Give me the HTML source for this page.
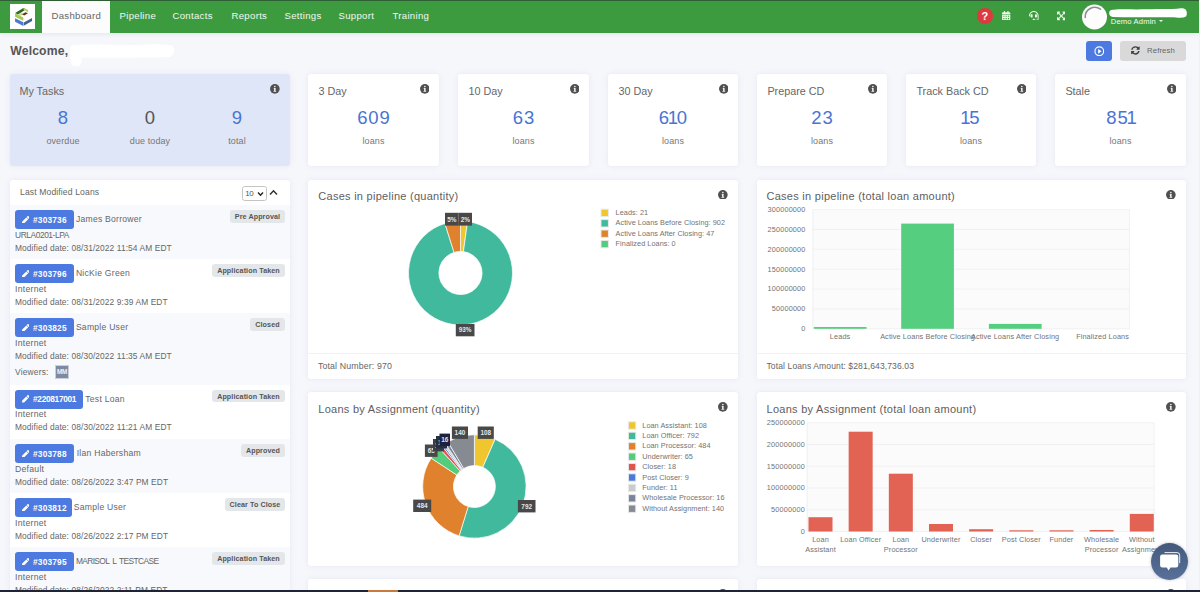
<!DOCTYPE html>
<html lang="en">
<head>
<meta charset="utf-8">
<title>Dashboard</title>
<style>
*{box-sizing:border-box;margin:0;padding:0}
html,body{width:1200px;height:592px;overflow:hidden}
body{background:#f6f7fb;font-family:"Liberation Sans",sans-serif;color:#555;position:relative;font-size:9px}
.abs{position:absolute}
.t{position:absolute;white-space:nowrap;line-height:1}
/* header */
#hdr{position:absolute;left:0;top:0;width:1200px;height:33px;background:#3d9b3f;border-top:1px solid #2e5e33;box-shadow:0 1px 4px rgba(60,70,90,.10)}
#logo{position:absolute;left:10px;top:3px;width:25.3px;height:25px;background:#fff}
#tab{position:absolute;left:42px;top:0;width:68px;height:32px;background:#fcfcfd}
.nav{position:absolute;top:10px;color:#f1f8f0;font-size:9.6px;white-space:nowrap;line-height:1;letter-spacing:.3px}
/* cards */
.card{position:absolute;background:#fff;border-radius:3px;box-shadow:0 0 5px rgba(205,210,228,.4)}
.ct{position:absolute;left:10.4px;top:11.8px;font-size:10.8px;color:#666;white-space:nowrap;line-height:1;letter-spacing:0}
.num{position:absolute;left:0;width:100%;text-align:center;top:35.1px;font-size:18.5px;color:#4a74d2;line-height:1;letter-spacing:.9px;padding-left:.9px}
.sub{position:absolute;left:0;width:100%;text-align:center;top:63.1px;font-size:9px;color:#777;line-height:1;letter-spacing:.1px}
.info{position:absolute;width:9.7px;height:9.7px;margin:.15px}
.btn{background:#4c7ae0;border-radius:3px}
.badge{background:#e3e7ea;border-radius:3px;color:#555;font-size:7.15px;font-weight:bold;text-align:center;line-height:15.4px;overflow:hidden;white-space:nowrap;letter-spacing:.1px}
.sm{font-size:8.4px;color:#666;letter-spacing:.1px}
.ttl{font-size:11px;color:#606060;letter-spacing:.27px}
svg text{font-family:"Liberation Sans",sans-serif}
</style>
</head>
<body>
<div id="hdr">
  <div id="logo">
    <svg width="25.3" height="25.2" viewBox="0 0 427 425" style="display:block">
      <polygon points="85,240 225,310 225,372 85,300" fill="#4a79d8"/>
      <polygon points="232,312 372,238 372,286 232,368" fill="#44608c"/>
      <polygon points="85,158 225,228 225,284 85,214" fill="#a9c94e"/>
      <polygon points="88,150 225,66 272,90 135,178" fill="#2a6a2c"/>
      <polygon points="228,62 306,100 306,138 266,116 228,96" fill="#b3d054"/>
      <polygon points="150,172 205,145 205,185 150,205" fill="#c5dc7a"/>
      <polygon points="200,172 262,138 304,158 240,194" fill="#6a3412"/>
    </svg>
  </div>
  <div id="tab"></div>
  <div class="nav" style="left:51.5px;color:#666">Dashboard</div>
  <div class="nav" style="left:119.5px">Pipeline</div>
  <div class="nav" style="left:172.5px">Contacts</div>
  <div class="nav" style="left:231.5px">Reports</div>
  <div class="nav" style="left:284.5px">Settings</div>
  <div class="nav" style="left:338.5px">Support</div>
  <div class="nav" style="left:392.5px">Training</div>
  <div class="abs" style="left:977.2px;top:7.2px;width:15.6px;height:15.6px;border-radius:50%;background:#dc3a3c"></div>
  <div class="t" style="left:981.6px;top:9.5px;font-size:11px;font-weight:bold;color:#fff">?</div>
  <svg class="abs" style="left:1002.4px;top:10.1px" width="8.4" height="9.4" viewBox="0 0 448 512"><path d="M0 464c0 26.5 21.5 48 48 48h352c26.5 0 48-21.5 48-48V192H0v272zm320-196c0-6.6 5.4-12 12-12h40c6.6 0 12 5.4 12 12v40c0 6.600-5.400 12-12 12h-40c-6.600 0-12-5.400-12-12v-40zm0 128c0-6.600 5.400-12 12-12h40c6.600 0 12 5.400 12 12v40c0 6.600-5.400 12-12 12h-40c-6.600 0-12-5.400-12-12v-40zM192 268c0-6.600 5.400-12 12-12h40c6.600 0 12 5.400 12 12v40c0 6.600-5.400 12-12 12h-40c-6.600 0-12-5.400-12-12v-40zm0 128c0-6.600 5.400-12 12-12h40c6.600 0 12 5.400 12 12v40c0 6.600-5.400 12-12 12h-40c-6.600 0-12-5.400-12-12v-40zM64 268c0-6.600 5.400-12 12-12h40c6.600 0 12 5.400 12 12v40c0 6.600-5.400 12-12 12H76c-6.600 0-12-5.400-12-12v-40zm0 128c0-6.600 5.400-12 12-12h40c6.600 0 12 5.400 12 12v40c0 6.600-5.400 12-12 12H76c-6.600 0-12-5.400-12-12v-40zM400 64h-48V16c0-8.800-7.200-16-16-16h-32c-8.800 0-16 7.200-16 16v48H160V16c0-8.800-7.200-16-16-16h-32c-8.800 0-16 7.200-16 16v48H48C21.500 64 0 85.500 0 112v48h448v-48c0-26.500-21.500-48-48-48z" fill="#eef8ec"/></svg>
  <svg class="abs" style="left:1029.2px;top:9.9px" width="9.6" height="9.6" viewBox="0 0 512 512"><path d="M192 208c0-17.670-14.330-32-32-32h-16c-35.350 0-64 28.650-64 64v48c0 35.350 28.650 64 64 64h16c17.670 0 32-14.330 32-32V208zm176 144c35.350 0 64-28.650 64-64v-48c0-35.350-28.650-64-64-64h-16c-17.670 0-32 14.330-32 32v112c0 17.670 14.330 32 32 32h16zM256 0C113.180 0 4.580 118.830 0 256v16c0 8.840 7.160 16 16 16h16c8.840 0 16-7.160 16-16v-16c0-114.690 93.310-208 208-208s208 93.310 208 208h-.12c.08 2.430.12 165.720.12 165.720 0 23.350-18.930 42.280-42.280 42.280H320c0-26.510-21.490-48-48-48h-32c-26.510 0-48 21.490-48 48s21.490 48 48 48h181.720c49.860 0 90.280-40.420 90.280-90.280V256C507.420 118.830 398.820 0 256 0z" fill="#eef8ec"/></svg>
  <svg class="abs" style="left:1056.8px;top:9.9px" width="8.6" height="9.8" viewBox="0 0 448 512"><path d="M448 344v112a23.940 23.940 0 0 1-24 24H312c-21.390 0-32.090-25.900-17-41l36.200-36.200L224 295.600 116.770 402.900 153 439c15.090 15.100 4.390 41-17 41H24a23.940 23.940 0 0 1-24-24V344c0-21.400 25.890-32.100 41-17l36.190 36.200L184.460 256 77.180 148.700 41 185c-15.100 15.100-41 4.400-41-17V56a23.940 23.940 0 0 1 24-24h112c21.390 0 32.090 25.900 17 41l-36.200 36.200L224 216.400l107.230-107.300L295 73c-15.090-15.100-4.390-41 17-41h112a23.940 23.940 0 0 1 24 24v112c0 21.400-25.890 32.100-41 17l-36.190-36.200L263.540 256l107.280 107.300L407 327.100c15.100-15.200 41-4.500 41 16.900z" fill="#eef8ec"/></svg>
  <svg class="abs" style="left:1081.8px;top:2.5px" width="25" height="26" viewBox="0 0 25 26"><circle cx="12.5" cy="13" r="12.5" fill="#fdfdfd"/><path d="M3.2 13.5A9.6 9.6 0 0 1 18.5 5.2" fill="none" stroke="#8a8c92" stroke-width="1.5" stroke-linecap="round"/></svg>
  <svg class="abs" style="left:1107px;top:5px" width="82" height="16" viewBox="0 0 82 16"><path d="M2.2 6.2C2.5 4.6 4 3.6 6 3.8C14 3 22 3.4 30 3.6C42 3 58 3.2 70 2.8C73 1.8 77 2 78.6 3.6C80.2 5.2 80.2 9 79 10.6C76 12.6 70 11.4 64 11.2C44 11 24 11.6 6 11C3.4 10.8 1.8 8.6 2.2 6.2Z" fill="#fff"/></svg>
  <div class="t" style="left:1110.8px;top:16.6px;font-size:7.6px;color:#f6fbf5;letter-spacing:.16px">Demo Admin</div>
  <div class="abs" style="left:1159.3px;top:19.2px;width:0;height:0;border-left:2.2px solid transparent;border-right:2.2px solid transparent;border-top:2.7px solid #f4faf3"></div>
</div>

<div class="t" style="left:10.3px;top:45.2px;font-size:12.2px;font-weight:bold;color:#555;letter-spacing:.15px">Welcome,</div>
<svg class="abs" style="left:66px;top:40px" width="112" height="28" viewBox="0 0 112 28"><path d="M4.5 7C5 5 7 4.5 10 4.8C30 4 50 4.6 70 5C82 4 96 4.2 104 5C107 5.4 108.4 8 108 11C107.6 14.6 106 17 102 17.2C80 17.6 40 18 16 17.8C15.8 21 15.6 24 14 25.4C11 26.4 6 26 5 24C4.2 18 4 12 4.5 7Z" fill="#fff" style="filter:blur(.7px)"/></svg>

<div class="abs btn" style="left:1085.6px;top:41px;width:26.4px;height:19.6px"></div>
<svg class="abs" style="left:1093.6px;top:45.6px" width="10.6" height="10.6" viewBox="0 0 100 100"><circle cx="50" cy="50" r="41" fill="none" stroke="#fff" stroke-width="11"/><path d="M39 28L71 50L39 72Z" fill="#fff"/></svg>
<div class="abs" style="left:1120.4px;top:41px;width:65.6px;height:19.6px;background:#d9d9d9;border-radius:3px"></div>
<svg class="abs" style="left:1130.8px;top:46.2px" width="8.8" height="8.8" viewBox="0 0 512 512"><path d="M370.72 133.28C339.458 104.008 298.888 87.962 255.848 88c-77.458.068-144.328 53.178-162.791 126.85-1.344 5.363-6.122 9.15-11.651 9.15H24.103c-7.498 0-13.194-6.807-11.807-14.176C33.933 94.924 134.813 8 256 8c66.448 0 126.791 26.136 171.315 68.685L463.03 40.97C478.149 25.851 504 36.559 504 57.941V192c0 13.255-10.745 24-24 24H345.941c-21.382 0-32.09-25.851-16.971-40.971l41.75-41.749zM32 296h134.059c21.382 0 32.09 25.851 16.971 40.971l-41.75 41.75c31.262 29.273 71.835 45.319 114.876 45.28 77.418-.07 144.315-53.144 162.787-126.849 1.344-5.363 6.122-9.15 11.651-9.15h57.304c7.498 0 13.194 6.807 11.807 14.176C478.067 417.076 377.187 504 256 504c-66.448 0-126.791-26.136-171.315-68.685L48.970 471.03C33.851 486.149 8 475.441 8 454.059V320c0-13.255 10.745-24 24-24z" fill="#3c3c3c"/></svg>
<div class="t" style="left:1147px;top:46.6px;font-size:7.7px;color:#666;letter-spacing:.15px">Refresh</div>
<!-- stat cards -->
<div class="card" style="left:10px;top:74px;width:280px;height:92px;background:#dfe6f7">
  <div class="ct" style="left:9.4px">My Tasks</div><svg class="info" style="left:260.2px;top:9.9px" viewBox="0 0 100 100"><circle cx="50" cy="50" r="50" fill="#505050"/><circle cx="50" cy="27" r="8.5" fill="#f2f2f2"/><path d="M38 42h20v30h6v8H36v-8h6V50h-4z" fill="#f2f2f2"/></svg>
  <div class="num" style="left:0;width:106px">8</div><div class="sub" style="left:0;width:106px">overdue</div>
  <div class="num" style="left:87px;width:106px;color:#555">0</div><div class="sub" style="left:87px;width:106px">due today</div>
  <div class="num" style="left:174px;width:106px">9</div><div class="sub" style="left:174px;width:106px">total</div>
</div>
<div class="card" style="left:308px;top:74px;width:131px;height:92px"><div class="ct">3 Day</div><svg class="info" style="left:111.6px;top:9.9px" viewBox="0 0 100 100"><circle cx="50" cy="50" r="50" fill="#505050"/><circle cx="50" cy="27" r="8.5" fill="#f2f2f2"/><path d="M38 42h20v30h6v8H36v-8h6V50h-4z" fill="#f2f2f2"/></svg><div class="num">609</div><div class="sub">loans</div></div>
<div class="card" style="left:458px;top:74px;width:131px;height:92px"><div class="ct">10 Day</div><svg class="info" style="left:111.6px;top:9.9px" viewBox="0 0 100 100"><circle cx="50" cy="50" r="50" fill="#505050"/><circle cx="50" cy="27" r="8.5" fill="#f2f2f2"/><path d="M38 42h20v30h6v8H36v-8h6V50h-4z" fill="#f2f2f2"/></svg><div class="num">63</div><div class="sub">loans</div></div>
<div class="card" style="left:608px;top:74px;width:130px;height:92px"><div class="ct">30 Day</div><svg class="info" style="left:110.6px;top:9.9px" viewBox="0 0 100 100"><circle cx="50" cy="50" r="50" fill="#505050"/><circle cx="50" cy="27" r="8.5" fill="#f2f2f2"/><path d="M38 42h20v30h6v8H36v-8h6V50h-4z" fill="#f2f2f2"/></svg><div class="num">6<span style="margin:0 -2.2px">1</span>0</div><div class="sub">loans</div></div>
<div class="card" style="left:757px;top:74px;width:130px;height:92px"><div class="ct">Prepare CD</div><svg class="info" style="left:110.6px;top:9.9px" viewBox="0 0 100 100"><circle cx="50" cy="50" r="50" fill="#505050"/><circle cx="50" cy="27" r="8.5" fill="#f2f2f2"/><path d="M38 42h20v30h6v8H36v-8h6V50h-4z" fill="#f2f2f2"/></svg><div class="num">23</div><div class="sub">loans</div></div>
<div class="card" style="left:906px;top:74px;width:130px;height:92px"><div class="ct">Track Back CD</div><svg class="info" style="left:110.6px;top:9.9px" viewBox="0 0 100 100"><circle cx="50" cy="50" r="50" fill="#505050"/><circle cx="50" cy="27" r="8.5" fill="#f2f2f2"/><path d="M38 42h20v30h6v8H36v-8h6V50h-4z" fill="#f2f2f2"/></svg><div class="num"><span style="margin:0 -2.2px">1</span>5</div><div class="sub">loans</div></div>
<div class="card" style="left:1055px;top:74px;width:131px;height:92px"><div class="ct">Stale</div><svg class="info" style="left:111.6px;top:9.9px" viewBox="0 0 100 100"><circle cx="50" cy="50" r="50" fill="#505050"/><circle cx="50" cy="27" r="8.5" fill="#f2f2f2"/><path d="M38 42h20v30h6v8H36v-8h6V50h-4z" fill="#f2f2f2"/></svg><div class="num">85<span style="margin:0 -2.2px">1</span></div><div class="sub">loans</div></div>


<div class="card" style="left:10px;top:180px;width:280px;height:430px;overflow:hidden"></div>
<div class="t" style="left:20px;top:188px;font-size:8.6px;color:#666;letter-spacing:.12px">Last Modified Loans</div>
<div class="abs" style="left:242px;top:186.2px;width:24.8px;height:14.4px;border:1px solid #c4c4c4;border-radius:2.5px;background:#fff"></div>
<div class="t" style="left:245.3px;top:189.6px;font-size:8px;color:#555;letter-spacing:-.4px">10</div>
<svg class="abs" style="left:257.1px;top:190.6px" width="7" height="6" viewBox="0 0 7 6"><path d="M1 1.5L3.5 4.2L6 1.5" fill="none" stroke="#222" stroke-width="1.4"/></svg>
<svg class="abs" style="left:269.2px;top:188.9px" width="9" height="7" viewBox="0 0 9 7"><path d="M1 5.5L4.5 1.8L8 5.5" fill="none" stroke="#333" stroke-width="1.5"/></svg>
<div class="abs" style="left:10px;top:205px;width:280px;height:54px;background:#f8f9fc"></div>
<div class="abs btn" style="left:15px;top:210px;width:58.6px;height:19px"></div>
<svg class="abs" style="left:21.9px;top:215.6px" width="7.6" height="7.6" viewBox="0 0 512 512"><path d="M290.74 93.24l128.02 128.02-277.99 277.99-114.14 12.6C11.35 513.54-1.56 500.62.14 485.34l12.7-114.22 277.9-277.88zm207.2-19.06l-60.11-60.11c-18.75-18.75-49.16-18.75-67.91 0l-56.55 56.55 128.02 128.02 56.55-56.55c18.75-18.76 18.75-49.16 0-67.91z" fill="#fff"/></svg>
<div class="t" style="left:33px;top:215.6px;font-size:8.3px;color:#fff;font-weight:bold;letter-spacing:0.2px">#303736</div>
<div class="t" style="left:75.9px;top:215.2px;font-size:8.6px;color:#666;letter-spacing:0.25px;word-spacing:0px">James Borrower</div>
<div class="abs badge" style="left:230px;top:210.2px;width:55px;height:12.6px">Pre Approval</div>
<div class="t sm" style="left:15px;top:231px;letter-spacing:-.42px">URLA0201-LPA</div>
<div class="t sm" style="left:15px;top:243.5px">Modified date: 08/31/2022 11:54 AM EDT</div>
<div class="abs btn" style="left:15px;top:264px;width:58.6px;height:19px"></div>
<svg class="abs" style="left:21.9px;top:269.6px" width="7.6" height="7.6" viewBox="0 0 512 512"><path d="M290.74 93.24l128.02 128.02-277.99 277.99-114.14 12.6C11.35 513.54-1.56 500.62.14 485.34l12.7-114.22 277.9-277.88zm207.2-19.06l-60.11-60.11c-18.75-18.75-49.16-18.75-67.91 0l-56.55 56.55 128.02 128.02 56.55-56.55c18.75-18.76 18.75-49.16 0-67.91z" fill="#fff"/></svg>
<div class="t" style="left:33px;top:269.6px;font-size:8.3px;color:#fff;font-weight:bold;letter-spacing:0.2px">#303796</div>
<div class="t" style="left:75.9px;top:269.2px;font-size:8.6px;color:#666;letter-spacing:0.25px;word-spacing:0px">NicKie Green</div>
<div class="abs badge" style="left:212px;top:264.2px;width:73px;height:12.6px">Application Taken</div>
<div class="t sm" style="left:15px;top:285px;font-size:8.7px;letter-spacing:.25px;margin-top:-.2px">Internet</div>
<div class="t sm" style="left:15px;top:297.5px">Modified date: 08/31/2022 9:39 AM EDT</div>
<div class="abs" style="left:10px;top:313px;width:280px;height:72px;background:#f8f9fc"></div>
<div class="abs btn" style="left:15px;top:318px;width:58.6px;height:19px"></div>
<svg class="abs" style="left:21.9px;top:323.6px" width="7.6" height="7.6" viewBox="0 0 512 512"><path d="M290.74 93.24l128.02 128.02-277.99 277.99-114.14 12.6C11.35 513.54-1.56 500.62.14 485.34l12.7-114.22 277.9-277.88zm207.2-19.06l-60.11-60.11c-18.75-18.75-49.16-18.75-67.91 0l-56.55 56.55 128.02 128.02 56.55-56.55c18.75-18.76 18.75-49.16 0-67.91z" fill="#fff"/></svg>
<div class="t" style="left:33px;top:323.6px;font-size:8.3px;color:#fff;font-weight:bold;letter-spacing:0.2px">#303825</div>
<div class="t" style="left:75.9px;top:323.2px;font-size:8.6px;color:#666;letter-spacing:0.25px;word-spacing:0px">Sample User</div>
<div class="abs badge" style="left:250px;top:318.2px;width:35px;height:12.6px">Closed</div>
<div class="t sm" style="left:15px;top:339px;font-size:8.7px;letter-spacing:.25px;margin-top:-.2px">Internet</div>
<div class="t sm" style="left:15px;top:351.5px">Modified date: 08/30/2022 11:35 AM EDT</div>
<div class="t sm" style="left:15px;top:367.8px;letter-spacing:.2px">Viewers:</div>
<div class="abs" style="left:55px;top:365px;width:14px;height:14px;background:#7d8aa3;border:1px solid #c9cfdb;color:#eef0f5;font-size:6.4px;font-weight:bold;text-align:center;line-height:12.4px;letter-spacing:-.3px">MM</div>
<div class="abs btn" style="left:15px;top:389.6px;width:68px;height:19px"></div>
<svg class="abs" style="left:21.9px;top:395.20000000000005px" width="7.6" height="7.6" viewBox="0 0 512 512"><path d="M290.74 93.24l128.02 128.02-277.99 277.99-114.14 12.6C11.35 513.54-1.56 500.62.14 485.34l12.7-114.22 277.9-277.88zm207.2-19.06l-60.11-60.11c-18.75-18.75-49.16-18.75-67.91 0l-56.55 56.55 128.02 128.02 56.55-56.55c18.75-18.76 18.75-49.16 0-67.91z" fill="#fff"/></svg>
<div class="t" style="left:33px;top:395.20000000000005px;font-size:8.3px;color:#fff;font-weight:bold;letter-spacing:-0.3px">#220817001</div>
<div class="t" style="left:85.3px;top:394.8px;font-size:8.6px;color:#666;letter-spacing:0.25px;word-spacing:0px">Test Loan</div>
<div class="abs badge" style="left:212px;top:389.8px;width:73px;height:12.6px">Application Taken</div>
<div class="t sm" style="left:15px;top:410.6px;font-size:8.7px;letter-spacing:.25px;margin-top:-.2px">Internet</div>
<div class="t sm" style="left:15px;top:423.1px">Modified date: 08/30/2022 11:21 AM EDT</div>
<div class="abs" style="left:10px;top:439px;width:280px;height:54px;background:#f8f9fc"></div>
<div class="abs btn" style="left:15px;top:444px;width:59.4px;height:19px"></div>
<svg class="abs" style="left:21.9px;top:449.6px" width="7.6" height="7.6" viewBox="0 0 512 512"><path d="M290.74 93.24l128.02 128.02-277.99 277.99-114.14 12.6C11.35 513.54-1.56 500.62.14 485.34l12.7-114.22 277.9-277.88zm207.2-19.06l-60.11-60.11c-18.75-18.75-49.16-18.75-67.91 0l-56.55 56.55 128.02 128.02 56.55-56.55c18.75-18.76 18.75-49.16 0-67.91z" fill="#fff"/></svg>
<div class="t" style="left:33px;top:449.6px;font-size:8.3px;color:#fff;font-weight:bold;letter-spacing:0.2px">#303788</div>
<div class="t" style="left:76.7px;top:449.2px;font-size:8.6px;color:#666;letter-spacing:0.25px;word-spacing:0px">Ilan Habersham</div>
<div class="abs badge" style="left:241px;top:444.2px;width:44px;height:12.6px">Approved</div>
<div class="t sm" style="left:15px;top:465px;font-size:8.7px;letter-spacing:.25px;margin-top:-.2px">Default</div>
<div class="t sm" style="left:15px;top:477.5px">Modified date: 08/26/2022 3:47 PM EDT</div>
<div class="abs btn" style="left:15px;top:498px;width:56.5px;height:19px"></div>
<svg class="abs" style="left:21.9px;top:503.6px" width="7.6" height="7.6" viewBox="0 0 512 512"><path d="M290.74 93.24l128.02 128.02-277.99 277.99-114.14 12.6C11.35 513.54-1.56 500.62.14 485.34l12.7-114.22 277.9-277.88zm207.2-19.06l-60.11-60.11c-18.75-18.75-49.16-18.75-67.91 0l-56.55 56.55 128.02 128.02 56.55-56.55c18.75-18.76 18.75-49.16 0-67.91z" fill="#fff"/></svg>
<div class="t" style="left:33px;top:503.6px;font-size:8.3px;color:#fff;font-weight:bold;letter-spacing:0.2px">#303812</div>
<div class="t" style="left:73.8px;top:503.2px;font-size:8.6px;color:#666;letter-spacing:0.25px;word-spacing:0px">Sample User</div>
<div class="abs badge" style="left:225px;top:498.2px;width:60px;height:12.6px">Clear To Close</div>
<div class="t sm" style="left:15px;top:519px;font-size:8.7px;letter-spacing:.25px;margin-top:-.2px">Internet</div>
<div class="t sm" style="left:15px;top:531.5px">Modified date: 08/26/2022 2:17 PM EDT</div>
<div class="abs" style="left:10px;top:547px;width:280px;height:54px;background:#f8f9fc"></div>
<div class="abs btn" style="left:15px;top:552px;width:58.6px;height:19px"></div>
<svg class="abs" style="left:21.9px;top:557.6px" width="7.6" height="7.6" viewBox="0 0 512 512"><path d="M290.74 93.24l128.02 128.02-277.99 277.99-114.14 12.6C11.35 513.54-1.56 500.62.14 485.34l12.7-114.22 277.9-277.88zm207.2-19.06l-60.11-60.11c-18.75-18.75-49.16-18.75-67.91 0l-56.55 56.55 128.02 128.02 56.55-56.55c18.75-18.76 18.75-49.16 0-67.91z" fill="#fff"/></svg>
<div class="t" style="left:33px;top:557.6px;font-size:8.3px;color:#fff;font-weight:bold;letter-spacing:0.2px">#303795</div>
<div class="t" style="left:75.9px;top:557.3000000000001px;font-size:8.4px;color:#666;letter-spacing:-0.62px;word-spacing:1.6px">MARISOL L TESTCASE</div>
<div class="abs badge" style="left:212px;top:552.2px;width:73px;height:12.6px">Application Taken</div>
<div class="t sm" style="left:15px;top:573px;font-size:8.7px;letter-spacing:.25px;margin-top:-.2px">Internet</div>
<div class="t sm" style="left:15px;top:585.5px">Modified date: 08/26/2022 2:11 PM EDT</div>
<div class="card" style="left:757px;top:180px;width:429px;height:199px"></div>
<div class="t ttl" style="left:766.5px;top:191.4px">Cases in pipeline (total loan amount)</div>
<svg class="info" style="left:1166.3px;top:189.5px" viewBox="0 0 100 100"><circle cx="50" cy="50" r="50" fill="#505050"/><circle cx="50" cy="27" r="8.5" fill="#f2f2f2"/><path d="M38 42h20v30h6v8H36v-8h6V50h-4z" fill="#f2f2f2"/></svg>
<div class="abs" style="left:757px;top:353px;width:429px;height:1px;background:#f1f2f6"></div>
<div class="t" style="left:766.5px;top:361.5px;font-size:8.55px;color:#666;letter-spacing:.1px">Total Loans Amount: $281,643,736.03</div>
<div class="card" style="left:308px;top:392px;width:430px;height:174px"></div>
<div class="t ttl" style="left:318.3px;top:403.9px">Loans by Assignment (quantity)</div>
<svg class="info" style="left:718.3px;top:402px" viewBox="0 0 100 100"><circle cx="50" cy="50" r="50" fill="#505050"/><circle cx="50" cy="27" r="8.5" fill="#f2f2f2"/><path d="M38 42h20v30h6v8H36v-8h6V50h-4z" fill="#f2f2f2"/></svg>
<div class="card" style="left:757px;top:392px;width:429px;height:174px"></div>
<div class="t ttl" style="left:766.5px;top:403.9px">Loans by Assignment (total loan amount)</div>
<svg class="info" style="left:1166.3px;top:402px" viewBox="0 0 100 100"><circle cx="50" cy="50" r="50" fill="#505050"/><circle cx="50" cy="27" r="8.5" fill="#f2f2f2"/><path d="M38 42h20v30h6v8H36v-8h6V50h-4z" fill="#f2f2f2"/></svg>
<div class="card" style="left:308px;top:579.4px;width:430px;height:40px"></div>
<div class="card" style="left:757px;top:579.4px;width:429px;height:40px"></div>
<svg class="info" style="left:718.3px;top:589.2px" viewBox="0 0 100 100"><circle cx="50" cy="50" r="50" fill="#505050"/><circle cx="50" cy="27" r="8.5" fill="#f2f2f2"/><path d="M38 42h20v30h6v8H36v-8h6V50h-4z" fill="#f2f2f2"/></svg>
<svg class="info" style="left:1166.3px;top:589.2px" viewBox="0 0 100 100"><circle cx="50" cy="50" r="50" fill="#505050"/><circle cx="50" cy="27" r="8.5" fill="#f2f2f2"/><path d="M38 42h20v30h6v8H36v-8h6V50h-4z" fill="#f2f2f2"/></svg>
<div class="card" style="left:308px;top:180px;width:430px;height:199px"></div>
<div class="t ttl" style="left:318.3px;top:191.4px">Cases in pipeline (quantity)</div>
<svg class="info" style="left:718.3px;top:189.5px" viewBox="0 0 100 100"><circle cx="50" cy="50" r="50" fill="#505050"/><circle cx="50" cy="27" r="8.5" fill="#f2f2f2"/><path d="M38 42h20v30h6v8H36v-8h6V50h-4z" fill="#f2f2f2"/></svg>
<div class="abs" style="left:308px;top:353px;width:430px;height:1px;background:#f1f2f6"></div>
<div class="t" style="left:318px;top:361.5px;font-size:8.8px;color:#666;letter-spacing:.12px">Total Number: 970</div>
<svg class="abs" style="left:0;top:0" width="1200" height="592" viewBox="0 0 1200 592">
<path d="M460.50,221.00A52,52 0 0 1 467.55,221.48L463.43,251.60A21.6,21.6 0 0 0 460.50,251.40Z" fill="#f0c62e" stroke="#fff" stroke-width=".7"/>
<path d="M467.55,221.48A52,52 0 1 1 444.91,223.39L454.03,252.39A21.6,21.6 0 1 0 463.43,251.60Z" fill="#41b99d" stroke="#fff" stroke-width=".7"/>
<path d="M444.91,223.39A52,52 0 0 1 460.50,221.00L460.50,251.40A21.6,21.6 0 0 0 454.03,252.39Z" fill="#e0812e" stroke="#fff" stroke-width=".7"/>
<rect x="445" y="212.8" width="13.6" height="12.8" fill="#484848"/><text x="451.8" y="221.50000000000003" font-size="6.4" font-weight="bold" fill="#e6e6e6" text-anchor="middle">5%</text>
<rect x="458.6" y="212.8" width="13.4" height="12.8" fill="#484848"/><text x="465.3" y="221.50000000000003" font-size="6.4" font-weight="bold" fill="#e6e6e6" text-anchor="middle">2%</text>
<rect x="455.8" y="324" width="18.7" height="12.3" fill="#484848"/><text x="465.15000000000003" y="332.45" font-size="6.4" font-weight="bold" fill="#e6e6e6" text-anchor="middle">93%</text>
<rect x="601" y="209.2" width="7.4" height="7.4" fill="#f0c62e" stroke="#e9e9e9" stroke-width="1"/>
<text x="615.6" y="215.0" font-size="7.3" fill="#737373" letter-spacing=".05">Leads: 21</text>
<rect x="601" y="219.6" width="7.4" height="7.4" fill="#41b99d" stroke="#e9e9e9" stroke-width="1"/>
<text x="615.6" y="225.4" font-size="7.3" fill="#737373" letter-spacing=".05">Active Loans Before Closing: 902</text>
<rect x="601" y="230.0" width="7.4" height="7.4" fill="#e0812e" stroke="#e9e9e9" stroke-width="1"/>
<text x="615.6" y="235.8" font-size="7.3" fill="#737373" letter-spacing=".05">Active Loans After Closing: 47</text>
<rect x="601" y="240.4" width="7.4" height="7.4" fill="#53cd7c" stroke="#e9e9e9" stroke-width="1"/>
<text x="615.6" y="246.2" font-size="7.3" fill="#737373" letter-spacing=".05">Finalized Loans: 0</text>
<path d="M474.40,434.80A51.7,51.7 0 0 1 495.15,439.15L482.83,467.27A21,21 0 0 0 474.40,465.50Z" fill="#f0c62e" stroke="#fff" stroke-width=".7"/>
<path d="M495.15,439.15A51.7,51.7 0 0 1 459.11,535.89L468.19,506.56A21,21 0 0 0 482.83,467.27Z" fill="#41b99d" stroke="#fff" stroke-width=".7"/>
<path d="M459.11,535.89A51.7,51.7 0 0 1 431.16,458.15L456.84,474.99A21,21 0 0 0 468.19,506.56Z" fill="#e0812e" stroke="#fff" stroke-width=".7"/>
<path d="M431.16,458.15A51.7,51.7 0 0 1 439.47,448.39L460.21,471.02A21,21 0 0 0 456.84,474.99Z" fill="#53cd7c" stroke="#fff" stroke-width=".7"/>
<path d="M439.47,448.39A51.7,51.7 0 0 1 442.17,446.07L461.31,470.08A21,21 0 0 0 460.21,471.02Z" fill="#e2554a" stroke="#fff" stroke-width=".7"/>
<path d="M442.17,446.07A51.7,51.7 0 0 1 443.58,444.99L461.88,469.64A21,21 0 0 0 461.31,470.08Z" fill="#4a78dc" stroke="#fff" stroke-width=".7"/>
<path d="M443.58,444.99A51.7,51.7 0 0 1 445.35,443.73L462.60,469.13A21,21 0 0 0 461.88,469.64Z" fill="#c9cbcd" stroke="#fff" stroke-width=".7"/>
<path d="M445.35,443.73A51.7,51.7 0 0 1 448.02,442.03L463.69,468.44A21,21 0 0 0 462.60,469.13Z" fill="#7b8499" stroke="#fff" stroke-width=".7"/>
<path d="M448.02,442.03A51.7,51.7 0 0 1 474.40,434.80L474.40,465.50A21,21 0 0 0 463.69,468.44Z" fill="#858b90" stroke="#fff" stroke-width=".7"/>
<rect x="413.2" y="499.6" width="18" height="12.4" fill="#484848"/><text x="422.2" y="508.1" font-size="6.4" font-weight="bold" fill="#e6e6e6" text-anchor="middle">484</text>
<rect x="517.9" y="500" width="17.6" height="12.4" fill="#484848"/><text x="526.6999999999999" y="508.5" font-size="6.4" font-weight="bold" fill="#e6e6e6" text-anchor="middle">792</text>
<rect x="424.9" y="444.5" width="12.7" height="12.4" fill="#484848"/><text x="431.25" y="453.0" font-size="6.4" font-weight="bold" fill="#e6e6e6" text-anchor="middle">65</text>
<rect x="433" y="439" width="11" height="12.4" fill="#3a3f4a"/><text x="438.5" y="447.5" font-size="6.4" font-weight="bold" fill="#e6e6e6" text-anchor="middle">18</text>
<rect x="436" y="436" width="11" height="12.4" fill="#2a2f3f"/><text x="441.5" y="444.5" font-size="6.4" font-weight="bold" fill="#e6e6e6" text-anchor="middle">11</text>
<rect x="439.5" y="433.6" width="10.5" height="12.4" fill="#1c2140"/><text x="444.75" y="442.1" font-size="6.4" font-weight="bold" fill="#e6e6e6" text-anchor="middle">16</text>
<rect x="451.9" y="426.5" width="16.1" height="12.4" fill="#484848"/><text x="459.95" y="435.0" font-size="6.4" font-weight="bold" fill="#e6e6e6" text-anchor="middle">140</text>
<rect x="477.7" y="426.5" width="16.1" height="12.4" fill="#484848"/><text x="485.75" y="435.0" font-size="6.4" font-weight="bold" fill="#e6e6e6" text-anchor="middle">108</text>
<rect x="628.4" y="421.8" width="7.4" height="7.4" fill="#f0c62e" stroke="#e9e9e9" stroke-width="1"/>
<text x="642.3" y="427.6" font-size="7.3" fill="#737373" letter-spacing=".05">Loan Assistant: 108</text>
<rect x="628.4" y="432.2" width="7.4" height="7.4" fill="#41b99d" stroke="#e9e9e9" stroke-width="1"/>
<text x="642.3" y="438.0" font-size="7.3" fill="#737373" letter-spacing=".05">Loan Officer: 792</text>
<rect x="628.4" y="442.6" width="7.4" height="7.4" fill="#e0812e" stroke="#e9e9e9" stroke-width="1"/>
<text x="642.3" y="448.4" font-size="7.3" fill="#737373" letter-spacing=".05">Loan Processor: 484</text>
<rect x="628.4" y="453.0" width="7.4" height="7.4" fill="#53cd7c" stroke="#e9e9e9" stroke-width="1"/>
<text x="642.3" y="458.8" font-size="7.3" fill="#737373" letter-spacing=".05">Underwriter: 65</text>
<rect x="628.4" y="463.4" width="7.4" height="7.4" fill="#e2554a" stroke="#e9e9e9" stroke-width="1"/>
<text x="642.3" y="469.2" font-size="7.3" fill="#737373" letter-spacing=".05">Closer: 18</text>
<rect x="628.4" y="473.8" width="7.4" height="7.4" fill="#4a78dc" stroke="#e9e9e9" stroke-width="1"/>
<text x="642.3" y="479.6" font-size="7.3" fill="#737373" letter-spacing=".05">Post Closer: 9</text>
<rect x="628.4" y="484.2" width="7.4" height="7.4" fill="#c9cbcd" stroke="#e9e9e9" stroke-width="1"/>
<text x="642.3" y="490.0" font-size="7.3" fill="#737373" letter-spacing=".05">Funder: 11</text>
<rect x="628.4" y="494.6" width="7.4" height="7.4" fill="#7b8499" stroke="#e9e9e9" stroke-width="1"/>
<text x="642.3" y="500.4" font-size="7.3" fill="#737373" letter-spacing=".05">Wholesale Processor: 16</text>
<rect x="628.4" y="505.0" width="7.4" height="7.4" fill="#858b90" stroke="#e9e9e9" stroke-width="1"/>
<text x="642.3" y="510.8" font-size="7.3" fill="#737373" letter-spacing=".05">Without Assignment: 140</text>
<rect x="812.8" y="209.6" width="316.70000000000005" height="119.20000000000002" fill="#fbfbfb"/>
<line x1="812.8" x2="1129.5" y1="209.60" y2="209.60" stroke="#efefef" stroke-width=".8"/>
<text x="805.6" y="211.90" font-size="7.3" fill="#737373" text-anchor="end" letter-spacing=".18">300000000</text>
<line x1="812.8" x2="1129.5" y1="229.47" y2="229.47" stroke="#efefef" stroke-width=".8"/>
<text x="805.6" y="231.77" font-size="7.3" fill="#737373" text-anchor="end" letter-spacing=".18">250000000</text>
<line x1="812.8" x2="1129.5" y1="249.33" y2="249.33" stroke="#efefef" stroke-width=".8"/>
<text x="805.6" y="251.63" font-size="7.3" fill="#737373" text-anchor="end" letter-spacing=".18">200000000</text>
<line x1="812.8" x2="1129.5" y1="269.20" y2="269.20" stroke="#efefef" stroke-width=".8"/>
<text x="805.6" y="271.50" font-size="7.3" fill="#737373" text-anchor="end" letter-spacing=".18">150000000</text>
<line x1="812.8" x2="1129.5" y1="289.07" y2="289.07" stroke="#efefef" stroke-width=".8"/>
<text x="805.6" y="291.37" font-size="7.3" fill="#737373" text-anchor="end" letter-spacing=".18">100000000</text>
<line x1="812.8" x2="1129.5" y1="308.93" y2="308.93" stroke="#efefef" stroke-width=".8"/>
<text x="805.6" y="311.23" font-size="7.3" fill="#737373" text-anchor="end" letter-spacing=".18">50000000</text>
<line x1="812.8" x2="1129.5" y1="328.80" y2="328.80" stroke="#efefef" stroke-width=".8"/>
<text x="805.6" y="331.10" font-size="7.3" fill="#737373" text-anchor="end" letter-spacing=".18">0</text>
<line x1="812.8" x2="812.8" y1="209.6" y2="328.8" stroke="#ececec" stroke-width=".8"/>
<line x1="1129.5" x2="1129.5" y1="209.6" y2="328.8" stroke="#efefef" stroke-width=".8"/>
<rect x="813.8" y="327" width="52.7" height="1.80" fill="#55ce80"/>
<rect x="901.2" y="223.6" width="52.7" height="105.20" fill="#55ce80"/>
<rect x="988.9" y="323.9" width="52.7" height="4.90" fill="#55ce80"/>
<text x="840.1" y="339.4" font-size="7.3" fill="#737373" text-anchor="middle" letter-spacing=".12">Leads</text>
<text x="927.6" y="339.4" font-size="7.3" fill="#737373" text-anchor="middle" letter-spacing=".12">Active Loans Before Closing</text>
<text x="1015.1" y="339.4" font-size="7.3" fill="#737373" text-anchor="middle" letter-spacing=".12">Active Loans After Closing</text>
<text x="1102.6" y="339.4" font-size="7.3" fill="#737373" text-anchor="middle" letter-spacing=".12">Finalized Loans</text>
<rect x="807" y="422.7" width="347.20000000000005" height="108.80000000000001" fill="#fbfbfb"/>
<line x1="807" x2="1154.2" y1="422.70" y2="422.70" stroke="#efefef" stroke-width=".8"/>
<text x="805" y="425.00" font-size="7.3" fill="#737373" text-anchor="end" letter-spacing=".18">250000000</text>
<line x1="807" x2="1154.2" y1="444.46" y2="444.46" stroke="#efefef" stroke-width=".8"/>
<text x="805" y="446.76" font-size="7.3" fill="#737373" text-anchor="end" letter-spacing=".18">200000000</text>
<line x1="807" x2="1154.2" y1="466.22" y2="466.22" stroke="#efefef" stroke-width=".8"/>
<text x="805" y="468.52" font-size="7.3" fill="#737373" text-anchor="end" letter-spacing=".18">150000000</text>
<line x1="807" x2="1154.2" y1="487.98" y2="487.98" stroke="#efefef" stroke-width=".8"/>
<text x="805" y="490.28" font-size="7.3" fill="#737373" text-anchor="end" letter-spacing=".18">100000000</text>
<line x1="807" x2="1154.2" y1="509.74" y2="509.74" stroke="#efefef" stroke-width=".8"/>
<text x="805" y="512.04" font-size="7.3" fill="#737373" text-anchor="end" letter-spacing=".18">50000000</text>
<line x1="807" x2="1154.2" y1="531.50" y2="531.50" stroke="#efefef" stroke-width=".8"/>
<text x="805" y="533.80" font-size="7.3" fill="#737373" text-anchor="end" letter-spacing=".18">0</text>
<line x1="807" x2="807" y1="422.7" y2="531.5" stroke="#ececec" stroke-width=".8"/>
<line x1="1154.2" x2="1154.2" y1="422.7" y2="531.5" stroke="#efefef" stroke-width=".8"/>
<rect x="808.50" y="517.2" width="24" height="14.30" fill="#e26354"/>
<text x="820.50" y="542" font-size="7.3" fill="#737373" text-anchor="middle" letter-spacing=".12">Loan</text>
<text x="820.50" y="551.7" font-size="7.3" fill="#737373" text-anchor="middle" letter-spacing=".12">Assistant</text>
<rect x="848.66" y="431.7" width="24" height="99.80" fill="#e26354"/>
<text x="860.66" y="542" font-size="7.3" fill="#737373" text-anchor="middle" letter-spacing=".12">Loan Officer</text>
<rect x="888.82" y="473.7" width="24" height="57.80" fill="#e26354"/>
<text x="900.82" y="542" font-size="7.3" fill="#737373" text-anchor="middle" letter-spacing=".12">Loan</text>
<text x="900.82" y="551.7" font-size="7.3" fill="#737373" text-anchor="middle" letter-spacing=".12">Processor</text>
<rect x="928.98" y="524" width="24" height="7.50" fill="#e26354"/>
<text x="940.98" y="542" font-size="7.3" fill="#737373" text-anchor="middle" letter-spacing=".12">Underwriter</text>
<rect x="969.14" y="529.2" width="24" height="2.30" fill="#e26354"/>
<text x="981.14" y="542" font-size="7.3" fill="#737373" text-anchor="middle" letter-spacing=".12">Closer</text>
<rect x="1009.30" y="530.3" width="24" height="1.20" fill="#e26354"/>
<text x="1021.30" y="542" font-size="7.3" fill="#737373" text-anchor="middle" letter-spacing=".12">Post Closer</text>
<rect x="1049.46" y="530.3" width="24" height="1.20" fill="#e26354"/>
<text x="1061.46" y="542" font-size="7.3" fill="#737373" text-anchor="middle" letter-spacing=".12">Funder</text>
<rect x="1089.62" y="530" width="24" height="1.50" fill="#e26354"/>
<text x="1101.62" y="542" font-size="7.3" fill="#737373" text-anchor="middle" letter-spacing=".12">Wholesale</text>
<text x="1101.62" y="551.7" font-size="7.3" fill="#737373" text-anchor="middle" letter-spacing=".12">Processor</text>
<rect x="1129.78" y="513.9" width="24" height="17.60" fill="#e26354"/>
<text x="1141.78" y="542" font-size="7.3" fill="#737373" text-anchor="middle" letter-spacing=".12">Without</text>
<text x="1141.78" y="551.7" font-size="7.3" fill="#737373" text-anchor="middle" letter-spacing=".12">Assignment</text>
</svg>
<div class="abs" style="left:1150.8px;top:542.6px;width:37.7px;height:37.7px;border-radius:50%;background:linear-gradient(#44597b,#58719a);box-shadow:0 0 3px rgba(60,70,90,.35)"></div>
<svg class="abs" style="left:1155px;top:548px" width="30" height="26" viewBox="0 0 30 26"><path d="M9.5 4.6h12.6a2.6 2.6 0 0 1 2.6 2.6v8" fill="none" stroke="#fff" stroke-width=".9"/><path d="M7.3 6.6h13.8a2.2 2.2 0 0 1 2.2 2.2v8.4a2.2 2.2 0 0 1-2.2 2.2h-5.6l-1.9 3.1l-1.9-3.1H7.3a2.2 2.2 0 0 1-2.2-2.2V8.8a2.2 2.2 0 0 1 2.2-2.2z" fill="#fff"/></svg>
<div class="abs" style="left:1198.6px;top:0;width:1.4px;height:592px;background:#f0f1f5"></div>
<div class="abs" style="left:0;top:590.4px;width:1200px;height:2px;background:#1d2438"></div>
<div class="abs" style="left:368px;top:590.4px;width:30px;height:2px;background:#c87a3c"></div>
</body>
</html>
